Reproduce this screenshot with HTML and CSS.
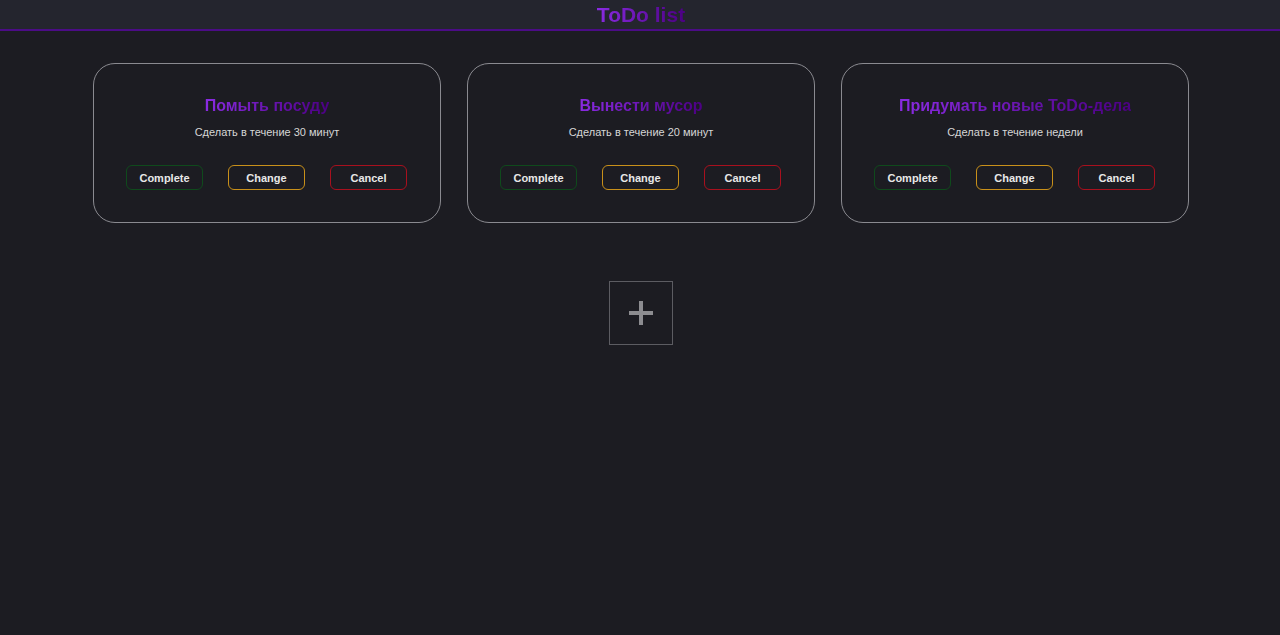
FILE: index.html
```html
<!DOCTYPE html>
<html lang="ru">
<head>
    <meta charset="UTF-8">
    <meta name="viewport" content="width=device-width, initial-scale=1.0">
    <title>ToDo list</title>
    <link rel="stylesheet" href="styles.css">
</head>
<body>
    <header class="header">
        <h1 class="gradient">ToDo list</h1>
    </header>
    <main class="container">
        <div class="cards">
            <div class="card">
                <h2 class="gradient">Помыть посуду</h2>
                <p>Сделать в течение 30 минут</p>
                <div class="buttons">
                    <button class="btn complete">Complete</button>
                    <button class="btn change">Change</button>
                    <button class="btn cancel">Cancel</button>
                </div>
            </div>
            <div class="card">
                <h2 class="gradient">Вынести мусор</h2>
                <p>Сделать в течение 20 минут</p>
                <div class="buttons">
                    <button class="btn complete">Complete</button>
                    <button class="btn change">Change</button>
                    <button class="btn cancel">Cancel</button>
                </div>
            </div>
            <div class="card">
                <h2 class="gradient">Придумать новые ToDo-дела</h2>
                <p>Сделать в течение недели</p>
                <div class="buttons">
                    <button class="btn complete">Complete</button>
                    <button class="btn change">Change</button>
                    <button class="btn cancel">Cancel</button>
                </div>
            </div>
        </div>
        <button class="add-btn" aria-label="Add">
            <svg width="28" height="28" viewBox="0 0 28 28">
                <path d="M14 2 V26 M2 14 H26" stroke="#8c8c90" stroke-width="4"/>
            </svg>
        </button>
    </main>
</body>
</html>
```

FILE: styles.css
```css
body {
    margin: 0;
    padding: 0;
    background-color: #1c1c22;
    font-family: Arial, "Liberation Sans", sans-serif;
    color: #ddd;
    min-height: 100vh;
}

.header {
    background-color: #24252e;
    height: 29px;
    border-bottom: 2px solid #4b0c86;
    display: flex;
    justify-content: center;
    overflow: hidden;
    padding-left: 2px;
}

.header h1 {
    margin: 0;
    margin-top: 2px;
    font-size: 21px;
    line-height: 26px;
}

.gradient {
    background: linear-gradient(90deg, #8a2be2, #4b0082);
    -webkit-background-clip: text;
    background-clip: text;
    color: transparent;
}

.container {
    display: flex;
    flex-direction: column;
    align-items: center;
    padding-left: 2px;
}

.cards {
    display: flex;
    gap: 26px;
    margin-top: 32px;
}

.card {
    width: 346px;
    height: 158px;
    border: 1px solid #8a8a90;
    border-radius: 22px;
    display: flex;
    flex-direction: column;
    align-items: center;
}

.card h2 {
    margin: 32px 0 0 0;
    font-size: 16px;
    line-height: 20px;
}

.card p {
    margin: 9px 0 0 0;
    font-size: 11px;
    line-height: 14px;
    color: #d6d6d6;
}

.buttons {
    display: flex;
    gap: 25px;
    margin-top: 26px;
    padding-right: 1px;
}

.btn {
    width: 77px;
    height: 25px;
    background: none;
    border: 1px solid;
    border-radius: 6px;
    color: #e8e8e8;
    font-family: Arial, "Liberation Sans", sans-serif;
    font-weight: bold;
    font-size: 11px;
    cursor: pointer;
    padding: 0;
}

.complete {
    border-color: #0f4a1c;
}

.change {
    border-color: #c8901a;
}

.cancel {
    border-color: #a8101e;
}

.add-btn {
    margin-top: 58px;
    width: 64px;
    height: 64px;
    background: none;
    border: 1px solid #5c5c62;
    display: flex;
    justify-content: center;
    align-items: center;
    padding: 0;
    cursor: pointer;
}
```
